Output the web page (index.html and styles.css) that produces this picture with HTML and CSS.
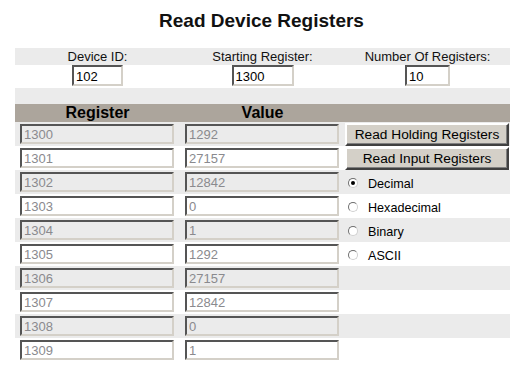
FILE: index.html
```html
<!DOCTYPE html>
<html lang="en">
<head>
    <meta charset="UTF-8">
    <title>Read Device Registers</title>
    <link rel="stylesheet" href="styles.css">
</head>
<body>
    <h1 class="title">Read Device Registers</h1>

    <table class="regs">
        <tr class="shade label-row">
            <td>Device ID:</td>
            <td>Starting Register:</td>
            <td>Number Of Registers:</td>
        </tr>
        <tr class="setup-row">
            <td><input type="text" class="setup id" value="102"></td>
            <td><input type="text" class="setup start" value="1300"></td>
            <td><input type="text" class="setup count" value="10"></td>
        </tr>
        <tr class="shade spacer"><td></td><td></td><td></td></tr>
        <tr class="head">
            <th>Register</th>
            <th>Value</th>
            <th></th>
        </tr>
        <tr class="shade">
            <td><input type="text" class="cell" value="1300" readonly></td>
            <td><input type="text" class="cell" value="1292" readonly></td>
            <td class="side"><button class="btn">Read Holding Registers</button></td>
        </tr>
        <tr>
            <td><input type="text" class="cell" value="1301" readonly></td>
            <td><input type="text" class="cell" value="27157" readonly></td>
            <td class="side"><button class="btn">Read Input Registers</button></td>
        </tr>
        <tr class="shade">
            <td><input type="text" class="cell" value="1302" readonly></td>
            <td><input type="text" class="cell" value="12842" readonly></td>
            <td class="side"><label class="opt"><input type="radio" name="fmt" checked> Decimal</label></td>
        </tr>
        <tr>
            <td><input type="text" class="cell" value="1303" readonly></td>
            <td><input type="text" class="cell" value="0" readonly></td>
            <td class="side"><label class="opt"><input type="radio" name="fmt"> Hexadecimal</label></td>
        </tr>
        <tr class="shade">
            <td><input type="text" class="cell" value="1304" readonly></td>
            <td><input type="text" class="cell" value="1" readonly></td>
            <td class="side"><label class="opt"><input type="radio" name="fmt"> Binary</label></td>
        </tr>
        <tr>
            <td><input type="text" class="cell" value="1305" readonly></td>
            <td><input type="text" class="cell" value="1292" readonly></td>
            <td class="side"><label class="opt"><input type="radio" name="fmt"> ASCII</label></td>
        </tr>
        <tr class="shade">
            <td><input type="text" class="cell" value="1306" readonly></td>
            <td><input type="text" class="cell" value="27157" readonly></td>
            <td class="side"></td>
        </tr>
        <tr>
            <td><input type="text" class="cell" value="1307" readonly></td>
            <td><input type="text" class="cell" value="12842" readonly></td>
            <td class="side"></td>
        </tr>
        <tr class="shade">
            <td><input type="text" class="cell" value="1308" readonly></td>
            <td><input type="text" class="cell" value="0" readonly></td>
            <td class="side"></td>
        </tr>
        <tr>
            <td><input type="text" class="cell" value="1309" readonly></td>
            <td><input type="text" class="cell" value="1" readonly></td>
            <td class="side"></td>
        </tr>
    </table>
</body>
</html>
```

FILE: styles.css
```css
body {
    font-family: "Liberation Sans", Arial, sans-serif;
    background-color: #fff;
    color: #111;
    margin: 0;
    padding: 0;
}
.title {
    font-size: 19px;
    line-height: 22px;
    font-weight: bold;
    text-align: center;
    margin: 10px 0 16px;
}
.regs {
    border-collapse: collapse;
    border-spacing: 0;
    table-layout: fixed;
    width: 495px;
    margin: 0 15px;
    font-size: 13px;
}
.regs td, .regs th {
    width: 165px;
    padding: 0 0 0 5px;
    height: 24px;
    vertical-align: middle;
    text-align: left;
}
.shade {
    background-color: #ebebeb;
}
.label-row td {
    height: 17px;
    line-height: 17px;
    padding: 0;
    text-align: center;
}
.setup-row td {
    height: 23px;
    padding: 0;
    text-align: center;
    vertical-align: top;
}
.spacer td {
    height: 16px;
}
.head th {
    background-color: #aca59c;
    height: 18px;
    line-height: 18px;
    font-size: 16px;
    font-weight: bold;
    color: #000;
    text-align: center;
    padding: 0;
}
.setup, .cell {
    box-sizing: border-box;
    font-family: "Liberation Sans", Arial, sans-serif;
    font-size: 13px;
    border: 2px solid;
    border-color: #555 #d4d0c8 #d4d0c8 #555;
    margin: 0;
    outline: none;
}
.setup {
    height: 21px;
    padding: 1px 2px 0;
    color: #000;
    background-color: #fff;
}
.setup.id { width: 51px; }
.setup.start { width: 62px; }
.setup.count { width: 45px; }
.cell {
    display: block;
    width: 154px;
    height: 20px;
    padding: 1px 2px 0;
    color: #8a8a8e;
    background: transparent;
}
.regs td.side {
    padding: 0;
    vertical-align: top;
}
.btn {
    display: block;
    box-sizing: border-box;
    width: 164px;
    height: 23px;
    margin-top: 1px;
    padding: 0;
    font-family: "Liberation Sans", Arial, sans-serif;
    font-size: 13.7px;
    color: #000;
    background-color: #d4d0c8;
    border: 2px solid;
    border-color: #fff #404040 #404040 #fff;
    box-shadow: inset -1px -1px 0 #808080;
}
.opt {
    display: flex;
    align-items: center;
    box-sizing: border-box;
    height: 24px;
    padding: 3px 0 0 3px;
    font-size: 12.6px;
    color: #000;
}
.opt input {
    appearance: none;
    -webkit-appearance: none;
    box-sizing: border-box;
    width: 10px;
    height: 10px;
    margin: -2px 10px 0 0;
    border: 1px solid;
    border-color: #6e6e6e #d0d0d0 #d0d0d0 #6e6e6e;
    border-radius: 50%;
    background-color: #fff;
    position: relative;
}
.opt input:checked::after {
    content: "";
    position: absolute;
    left: 2px;
    top: 2px;
    width: 4px;
    height: 4px;
    border-radius: 50%;
    background-color: #000;
}
```
